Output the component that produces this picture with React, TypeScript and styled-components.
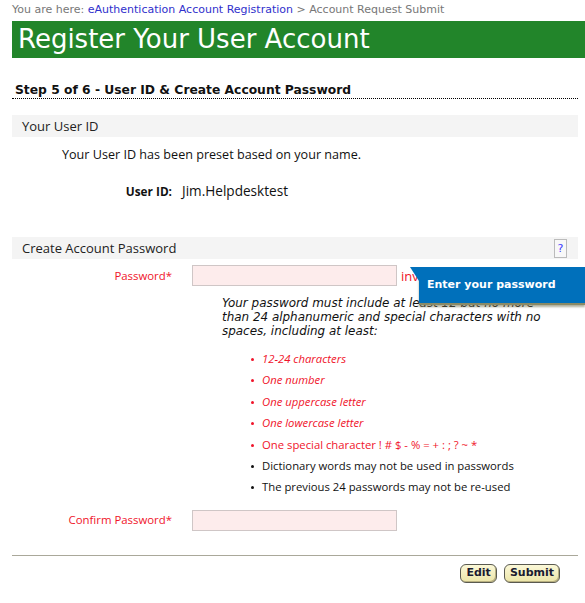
import styled, { createGlobalStyle } from "styled-components";

const GlobalStyle = createGlobalStyle`
    body {
        margin: 0;
        background: #ffffff;
        font-family: "Open Sans", "Liberation Sans", sans-serif;
        color: #111111;
    }
`;

const Page = styled.div`
    width: 566px;
    padding: 0 7px 0 12px;
`;

const Breadcrumb = styled.div`
    height: 21px;
    line-height: 20px;
    font-family: "DejaVu Sans", Verdana, sans-serif;
    font-size: 11px;
    color: #777777;
    white-space: nowrap;
`;

const Crumb = styled.a`
    color: #3030cc;
    text-decoration: none;
`;

const Banner = styled.h1`
    margin: 0 -7px 0 0;
    height: 37px;
    line-height: 37px;
    padding-left: 6px;
    background: #22852a;
    color: #ffffff;
    font-family: "DejaVu Sans", Verdana, sans-serif;
    font-weight: normal;
    font-size: 26px;
    white-space: nowrap;
`;

const StepTitle = styled.h2`
    margin: 25px 0 0 0;
    padding-left: 3px;
    height: 15px;
    line-height: 15px;
    border-bottom: 1px dotted #000000;
    font-family: "DejaVu Sans", Verdana, sans-serif;
    font-size: 12.3px;
    font-weight: bold;
    white-space: nowrap;
`;

const SectionHead = styled.div<{ $top: number }>`
    margin-top: ${(p) => p.$top}px;
    height: 22px;
    display: flex;
    align-items: center;
    justify-content: space-between;
    padding: 0 11px 0 10px;
    background: #f4f4f4;
    font-size: 13px;
    color: #222222;
`;

const HelpBox = styled.span`
    width: 11px;
    height: 17px;
    border: 1px solid #bbbbbb;
    background: #f8f8f8;
    color: #3b3bff;
    font-family: "DejaVu Sans", Verdana, sans-serif;
    font-size: 11px;
    line-height: 17px;
    text-align: center;
`;

const Intro = styled.p`
    margin: 10px 0 0 0;
    padding-left: 50px;
    line-height: 16px;
    font-size: 12.6px;
`;

const FieldRow = styled.div<{ $top: number; $gap: number }>`
    position: relative;
    margin-top: ${(p) => p.$top}px;
    display: flex;
    align-items: center;
    gap: ${(p) => p.$gap}px;
    line-height: 16px;
`;

const Label = styled.span<{ $required?: boolean }>`
    width: 160px;
    text-align: right;
    font-size: ${(p) => (p.$required ? "11.4px" : "11.8px")};
    color: ${(p) => (p.$required ? "#f0142a" : "#111111")};
    font-weight: ${(p) => (p.$required ? "normal" : "bold")};
`;

const Value = styled.span`
    font-size: 13.6px;
`;

const Input = styled.input`
    box-sizing: border-box;
    width: 205px;
    height: 21px;
    margin: 0;
    border: 1px solid #cfc6c6;
    background: #fdecec;
`;

const Invalid = styled.span`
    margin-left: -16px;
    font-size: 13px;
    color: #f0142a;
`;

const Tooltip = styled.div`
    position: absolute;
    left: 407px;
    top: 2px;
    width: 158px;
    height: 36px;
    padding-left: 8px;
    display: flex;
    align-items: center;
    background: #0070bb;
    color: #ffffff;
    font-family: "DejaVu Sans", Verdana, sans-serif;
    font-size: 11px;
    font-weight: bold;
    box-shadow: 0 2px 0 #8a8a66, 0 4px 2px rgba(120, 120, 90, 0.6);
    z-index: 2;

    &::before {
        content: "";
        position: absolute;
        left: -9px;
        top: 0;
        border-right: 9px solid #0070bb;
        border-bottom: 14px solid transparent;
    }
`;

const Rules = styled.p`
    margin: 10px 0 0 210px;
    width: 334px;
    line-height: 14px;
    font-family: "DejaVu Sans", Verdana, sans-serif;
    font-style: italic;
    font-size: 11.95px;
    color: #111111;
`;

const Checklist = styled.ul`
    margin: 10px 0 0 0;
    padding: 0 0 0 250px;
    list-style: none;
`;

const Item = styled.li<{ $bad?: boolean; $italic?: boolean }>`
    position: relative;
    height: 21.4px;
    line-height: 21.4px;
    font-size: 11.3px;
    white-space: nowrap;
    color: ${(p) => (p.$bad ? "#f0142a" : "#111111")};
    font-style: ${(p) => (p.$italic ? "italic" : "normal")};

    &::before {
        content: "";
        position: absolute;
        left: -11px;
        top: 10px;
        width: 3px;
        height: 3px;
        border-radius: 50%;
        background: ${(p) => (p.$bad ? "#f0142a" : "#111111")};
    }
`;

const Divider = styled.hr`
    margin: 24px 0 0 0;
    border: 0;
    border-top: 1px solid #aaa89a;
    height: 0;
`;

const Actions = styled.div`
    display: flex;
    justify-content: flex-end;
    gap: 7px;
    margin-top: 8px;
    padding-right: 18px;
`;

const Button = styled.button`
    height: 19px;
    padding: 0 5px;
    border: 1px solid #5a5a50;
    border-radius: 6px;
    background: linear-gradient(#fbf8d8, #ece5a8);
    box-shadow: inset -1px -1px 0 #b8b080;
    font-family: "DejaVu Sans", Verdana, sans-serif;
    font-size: 11px;
    font-weight: bold;
    color: #1a1a30;
    line-height: 16px;
`;

const rules = [
    { text: "12-24 characters", bad: true, italic: true },
    { text: "One number", bad: true, italic: true },
    { text: "One uppercase letter", bad: true, italic: true },
    { text: "One lowercase letter", bad: true, italic: true },
    { text: "One special character ! # $ - % = + : ; ? ~ *", bad: true, italic: false },
    { text: "Dictionary words may not be used in passwords", bad: false, italic: false },
    { text: "The previous 24 passwords may not be re-used", bad: false, italic: false },
];

export default function App() {
    return (
        <Page>
            <GlobalStyle />
            <Breadcrumb>
                You are here: <Crumb href="#">eAuthentication Account Registration</Crumb>{" "}
                &gt; Account Request Submit
            </Breadcrumb>
            <Banner>Register Your User Account</Banner>
            <StepTitle>Step 5 of 6 - User ID &amp; Create Account Password</StepTitle>

            <SectionHead $top={16}>Your User ID</SectionHead>
            <Intro>Your User ID has been preset based on your name.</Intro>
            <FieldRow $top={20} $gap={10}>
                <Label>User ID:</Label>
                <Value>Jim.Helpdesktest</Value>
            </FieldRow>

            <SectionHead $top={38}>
                Create Account Password
                <HelpBox>?</HelpBox>
            </SectionHead>
            <FieldRow $top={6} $gap={20}>
                <Label $required>Password*</Label>
                <Input type="password" />
                <Invalid>invalid</Invalid>
                <Tooltip>Enter your password</Tooltip>
            </FieldRow>
            <Rules>
                Your password must include at least 12 but no more than 24 alphanumeric and
                special characters with no spaces, including at least:
            </Rules>
            <Checklist>
                {rules.map((r) => (
                    <Item key={r.text} $bad={r.bad} $italic={r.italic}>
                        {r.text}
                    </Item>
                ))}
            </Checklist>
            <FieldRow $top={12} $gap={20}>
                <Label $required>Confirm Password*</Label>
                <Input type="password" />
            </FieldRow>

            <Divider />
            <Actions>
                <Button>Edit</Button>
                <Button>Submit</Button>
            </Actions>
        </Page>
    );
}
